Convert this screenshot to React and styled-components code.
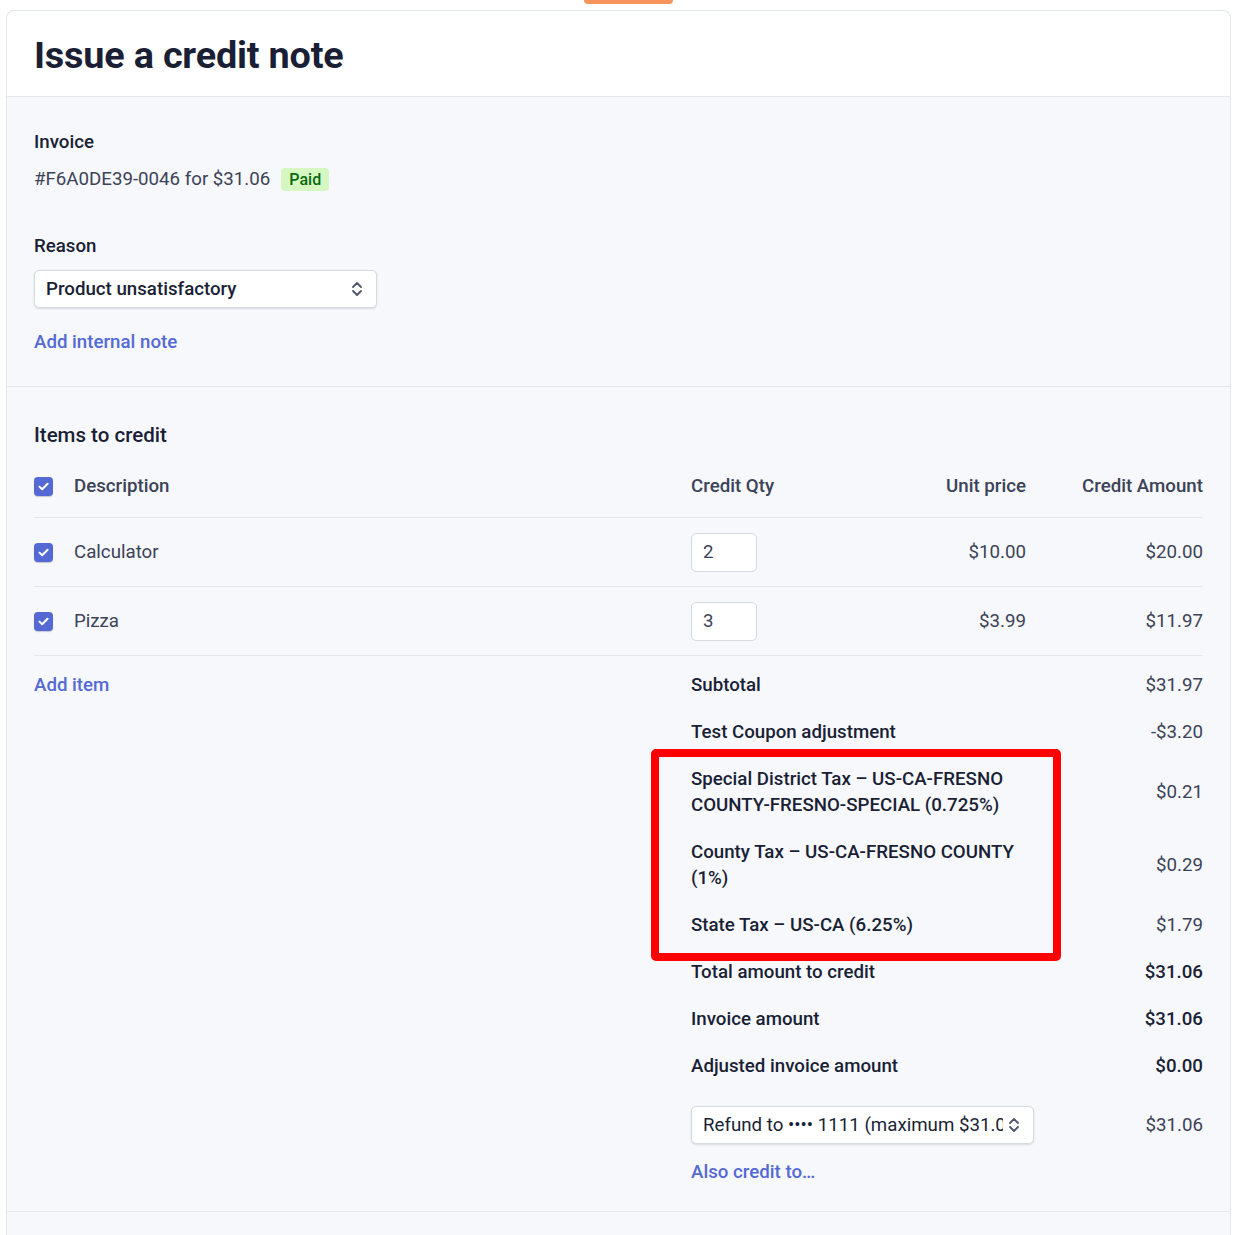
import React from "react";
import styled, { createGlobalStyle } from "styled-components";

const Global = createGlobalStyle`
  html, body { margin: 0; padding: 0; background: #ffffff; }
  body { font-family: Roboto, "Noto Sans", "Liberation Sans", sans-serif; color: #1a1f36; -webkit-font-smoothing: antialiased; }
  * { box-sizing: border-box; }
`;

const FS = "18.7px";

const Page = styled.div`
  width: 1242px;
  height: 1235px;
  overflow: hidden;
`;

const TopStrip = styled.div`
  height: 10px;
  display: flex;
`;

const OrangeTab = styled.div`
  margin-left: 584px;
  width: 89px;
  height: 4px;
  background: #f7945e;
  border-radius: 0 0 5px 5px;
`;

const Card = styled.div`
  margin-left: 6px;
  width: 1225px;
  border: 1px solid #e3e8ee;
  border-bottom: none;
  border-radius: 8px 8px 0 0;
  background: #f6f8fb;
  min-height: 1240px;
`;

const Header = styled.div`
  background: #ffffff;
  border-radius: 8px 8px 0 0;
  border-bottom: 1px solid #e3e8ee;
  padding: 22px 27px 19px;
`;

const Title = styled.h1`
  margin: 0;
  font-size: 37.8px;
  line-height: 44px;
  font-weight: 700;
  color: #1a1f36;
  letter-spacing: -0.2px;
`;

const Section = styled.div`
  padding: ${(p) => p.$pad};
  border-bottom: 1px solid #e3e8ee;
`;

const Label = styled.div`
  font-size: ${FS};
  line-height: 26px;
  font-weight: 500;
  color: #1a1f36;
  margin-top: ${(p) => p.$mt || 0}px;
`;

const InvoiceLine = styled.div`
  margin-top: 11px;
  display: flex;
  align-items: center;
  gap: 11px;
  font-size: ${FS};
  line-height: 26px;
  color: #3c4257;
`;

const Badge = styled.span`
  background: #d7f7c2;
  color: #05690d;
  font-size: 16px;
  font-weight: 500;
  line-height: 23px;
  padding: 0 8px;
  border-radius: 4px;
`;

const SelectBox = styled.div`
  margin-top: ${(p) => p.$mt || 0}px;
  width: ${(p) => p.$w}px;
  height: 38px;
  background: #ffffff;
  border: 1px solid #d5dae1;
  border-radius: 5px;
  box-shadow: 0 1px 2px rgba(60, 66, 87, 0.16);
  display: flex;
  align-items: center;
  padding: 0 12px 0 11px;
`;

const SelectText = styled.span`
  flex: 1;
  font-size: ${FS};
  font-weight: ${(p) => p.$weight || 500};
  color: #1a1f36;
  white-space: nowrap;
  overflow: hidden;
  min-width: 0;
  margin-right: 4px;
`;

const Link = styled.a`
  display: block;
  font-size: ${FS};
  line-height: 26px;
  font-weight: 500;
  color: #5469d4;
  text-decoration: none;
  margin-top: ${(p) => p.$mt || 0}px;
`;

const SectionTitle = styled.div`
  font-size: 20.5px;
  line-height: 28px;
  font-weight: 500;
  color: #1a1f36;
`;

const Grid = styled.div`
  display: grid;
  grid-template-columns: 657px 160px 175px 177px;
  align-items: center;
  height: 69px;
  padding-top: ${(p) => (p.$head ? 6 : 0)}px;
  border-bottom: 1px solid #e3e8ee;
`;

const Cell = styled.div`
  display: flex;
  align-items: center;
  justify-content: ${(p) => (p.$right ? "flex-end" : "flex-start")};
  gap: 21px;
  font-size: ${FS};
  line-height: 26px;
  font-weight: ${(p) => (p.$head ? 500 : 400)};
  color: #3c4257;
`;

const Check = styled.span`
  width: 19px;
  height: 19px;
  border-radius: 4px;
  background: #5469d4;
  display: inline-flex;
  align-items: center;
  justify-content: center;
  box-shadow: 0 1px 1px rgba(50, 50, 93, 0.25);
  flex: none;
`;

const QtyInput = styled.div`
  width: 66px;
  height: 39px;
  background: #ffffff;
  border: 1px solid #d5dae1;
  border-radius: 5px;
  padding-left: 11px;
  display: flex;
  align-items: center;
  font-size: ${FS};
  color: #3c4257;
`;

const Summary = styled.div`
  display: grid;
  grid-template-columns: 657px 512px;
  padding-top: ${(p) => p.$pt || 0}px;
`;

const SummaryList = styled.div`
  display: flex;
  flex-direction: column;
  gap: 21px;
`;

const TaxGroup = styled.div`
  position: relative;
  display: flex;
  flex-direction: column;
  gap: 21px;
`;

const Highlight = styled.div`
  position: absolute;
  top: -17px;
  bottom: -23px;
  left: -40px;
  width: 410px;
  border: 8px solid #ff0000;
  border-radius: 5px;
  pointer-events: none;
`;

const SumRow = styled.div`
  display: grid;
  grid-template-columns: 335px 177px;
  align-items: center;
`;

const SumLabel = styled.div`
  font-size: ${FS};
  line-height: 26px;
  font-weight: 500;
  color: #1a1f36;
  padding-right: 12px;
`;

const SumValue = styled.div`
  text-align: right;
  font-size: ${FS};
  line-height: 26px;
  font-weight: ${(p) => (p.$strong ? 500 : 400)};
  color: ${(p) => (p.$strong ? "#1a1f36" : "#3c4257")};
`;

const RefundRow = styled(SumRow)`
  margin-top: 6px;
`;

const Chevrons = () => (
  <svg width="14" height="18" viewBox="0 0 14 18" fill="none">
    <path d="M3 7l4-4 4 4" stroke="#4f566b" strokeWidth="1.8" strokeLinecap="round" strokeLinejoin="round" />
    <path d="M3 11l4 4 4-4" stroke="#4f566b" strokeWidth="1.8" strokeLinecap="round" strokeLinejoin="round" />
  </svg>
);

const CheckMark = () => (
  <Check>
    <svg width="11" height="9" viewBox="0 0 11 9" fill="none">
      <path d="M1.5 4.6l2.7 2.7L9.6 1.8" stroke="#ffffff" strokeWidth="2" strokeLinecap="round" strokeLinejoin="round" />
    </svg>
  </Check>
);

const items = [
  { name: "Calculator", qty: "2", price: "$10.00", amount: "$20.00" },
  { name: "Pizza", qty: "3", price: "$3.99", amount: "$11.97" },
];

export default function App() {
  return (
    <Page>
      <Global />
      <TopStrip>
        <OrangeTab />
      </TopStrip>
      <Card>
        <Header>
          <Title>Issue a credit note</Title>
        </Header>

        <Section $pad="32px 27px 31px">
          <Label>Invoice</Label>
          <InvoiceLine>
            #F6A0DE39-0046 for $31.06 <Badge>Paid</Badge>
          </InvoiceLine>
          <Label $mt={41}>Reason</Label>
          <SelectBox $mt={11} $w={343}>
            <SelectText>Product unsatisfactory</SelectText>
            <Chevrons />
          </SelectBox>
          <Link $mt={21} href="#">Add internal note</Link>
        </Section>

        <Section $pad="34px 27px 26px">
          <SectionTitle>Items to credit</SectionTitle>
          <Grid $head>
            <Cell $head>
              <CheckMark />
              Description
            </Cell>
            <Cell $head>Credit Qty</Cell>
            <Cell $head $right>Unit price</Cell>
            <Cell $head $right>Credit Amount</Cell>
          </Grid>
          {items.map((it) => (
            <Grid key={it.name}>
              <Cell>
                <CheckMark />
                {it.name}
              </Cell>
              <Cell>
                <QtyInput>{it.qty}</QtyInput>
              </Cell>
              <Cell $right>{it.price}</Cell>
              <Cell $right>{it.amount}</Cell>
            </Grid>
          ))}

          <Summary $pt={16}>
            <div>
              <Link href="#">Add item</Link>
            </div>
            <SummaryList>
              <SumRow>
                <SumLabel>Subtotal</SumLabel>
                <SumValue>$31.97</SumValue>
              </SumRow>
              <SumRow>
                <SumLabel>Test Coupon adjustment</SumLabel>
                <SumValue>-$3.20</SumValue>
              </SumRow>
              <TaxGroup>
                <Highlight />
                <SumRow>
                  <SumLabel>Special District Tax – US-CA-FRESNO COUNTY-FRESNO-SPECIAL (0.725%)</SumLabel>
                  <SumValue>$0.21</SumValue>
                </SumRow>
                <SumRow>
                  <SumLabel>County Tax – US-CA-FRESNO COUNTY (1%)</SumLabel>
                  <SumValue>$0.29</SumValue>
                </SumRow>
                <SumRow>
                  <SumLabel>State Tax – US-CA (6.25%)</SumLabel>
                  <SumValue>$1.79</SumValue>
                </SumRow>
              </TaxGroup>
              <SumRow>
                <SumLabel>Total amount to credit</SumLabel>
                <SumValue $strong>$31.06</SumValue>
              </SumRow>
              <SumRow>
                <SumLabel>Invoice amount</SumLabel>
                <SumValue $strong>$31.06</SumValue>
              </SumRow>
              <SumRow>
                <SumLabel>Adjusted invoice amount</SumLabel>
                <SumValue $strong>$0.00</SumValue>
              </SumRow>
              <RefundRow>
                <SelectBox $w={343}>
                  <SelectText $weight={400}>Refund to •••• 1111 (maximum $31.06)</SelectText>
                  <Chevrons />
                </SelectBox>
                <SumValue>$31.06</SumValue>
              </RefundRow>
            </SummaryList>
          </Summary>
          <Summary>
            <div />
            <Link $mt={15} href="#">Also credit to…</Link>
          </Summary>
        </Section>
      </Card>
    </Page>
  );
}
